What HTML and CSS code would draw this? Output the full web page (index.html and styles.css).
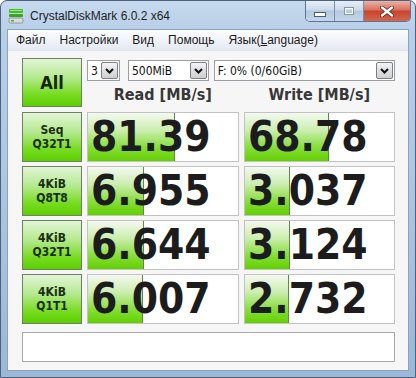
FILE: index.html
```html
<!DOCTYPE html>
<html>
<head lang="ru">
    <meta charset="UTF-8">
    <title>CrystalDiskMark 6.0.2 x64</title>
    <link rel="stylesheet" href="styles.css">
</head>
<body>
<div class="window">
    <div class="titlebar">
        <svg class="appicon" width="16" height="16" viewBox="0 0 16 16">
            <rect x="1" y="1" width="14" height="4" rx="1" fill="#3fbf1f"/>
            <rect x="2" y="2" width="12" height="1" fill="#9be87a"/>
            <rect x="1" y="6" width="14" height="3" rx="1" fill="#37a81a"/>
            <rect x="1" y="10" width="14" height="5" rx="1.5" fill="#d8dcdf" stroke="#7d868e" stroke-width="0.8"/>
            <rect x="3" y="12" width="3" height="1.5" fill="#3fbf1f"/>
        </svg>
        <span class="title">CrystalDiskMark 6.0.2 x64</span>
        <div class="winbtns">
            <div class="wb wb-min"><span></span></div>
            <div class="wb wb-max"><span></span></div>
            <div class="wb wb-close">
                <svg width="14" height="11" viewBox="0 0 14 11">
                    <path d="M2 1.5 L12 9.5 M12 1.5 L2 9.5" stroke="#5a2018" stroke-width="4" stroke-linecap="round"/>
                    <path d="M2 1.5 L12 9.5 M12 1.5 L2 9.5" stroke="#fff" stroke-width="2.4" stroke-linecap="round"/>
                </svg>
            </div>
        </div>
    </div>
    <div class="inner">
        <ul class="menubar">
            <li>Файл</li>
            <li>Настройки</li>
            <li>Вид</li>
            <li>Помощь</li>
            <li>Язык(<u>L</u>anguage)</li>
        </ul>
        <div class="client">
            <div class="grid">
                <div class="btn btn-all">All</div>
                <div class="top">
                    <div class="combos">
                        <div class="combo c-count"><span>3</span><i class="arrow"><svg width="9" height="6" viewBox="0 0 9 6"><polyline points="1,1 4.5,4.5 8,1" fill="none" stroke="#111" stroke-width="2"/></svg></i></div>
                        <div class="combo c-size"><span>500MiB</span><i class="arrow"><svg width="9" height="6" viewBox="0 0 9 6"><polyline points="1,1 4.5,4.5 8,1" fill="none" stroke="#111" stroke-width="2"/></svg></i></div>
                        <div class="combo c-drive"><span>F: 0% (0/60GiB)</span><i class="arrow"><svg width="9" height="6" viewBox="0 0 9 6"><polyline points="1,1 4.5,4.5 8,1" fill="none" stroke="#111" stroke-width="2"/></svg></i></div>
                    </div>
                    <div class="heads">
                        <div class="head">Read [MB/s]</div>
                        <div class="head">Write [MB/s]</div>
                    </div>
                </div>

                <div class="btn">Seq<br>Q32T1</div>
                <div class="res" style="--fill:58%">81.39</div>
                <div class="res" style="--fill:56%">68.78</div>

                <div class="btn">4KiB<br>Q8T8</div>
                <div class="res" style="--fill:37%">6.955</div>
                <div class="res" style="--fill:30%">3.037</div>

                <div class="btn">4KiB<br>Q32T1</div>
                <div class="res" style="--fill:37%">6.644</div>
                <div class="res" style="--fill:30%">3.124</div>

                <div class="btn">4KiB<br>Q1T1</div>
                <div class="res" style="--fill:36%">6.007</div>
                <div class="res" style="--fill:29%">2.732</div>
            </div>
            <div class="status"></div>
        </div>
    </div>
</div>
</body>
</html>
```

FILE: styles.css
```css
body, div, ul, li, span {
    margin: 0;
    padding: 0;
    list-style: none;
}

body {
    width: 416px;
    height: 378px;
    overflow: hidden;
    background: #fff;
}

.window {
    box-sizing: border-box;
    width: 416px;
    height: 378px;
    border: 1px solid #4d627c;
    border-radius: 7px 7px 0 0;
    padding: 0 6px 6px 6px;
    background: linear-gradient(#c6d9ee, #b8cfe8 30px, #a9c3df 60%, #9cb8d8);
    display: flex;
    flex-direction: column;
}

/* title bar */
.titlebar {
    height: 28px;
    display: flex;
    align-items: flex-start;
}

.appicon {
    margin: 7px 0 0 1px;
}

.title {
    margin: 8px 0 0 6px;
    font: 12px "Liberation Sans", Arial, sans-serif;
    color: #1e1e1e;
}

.winbtns {
    margin-left: auto;
    margin-right: -2px;
    display: flex;
    height: 20px;
    border: 1px solid #5f7592;
    border-top: none;
    border-radius: 0 0 5px 5px;
    overflow: hidden;
}

.wb {
    height: 20px;
    display: flex;
    align-items: center;
    justify-content: center;
}

.wb-min, .wb-max {
    width: 28px;
    background: linear-gradient(#e6eef7, #cbdaeb 45%, #b3c8df 50%, #c4d6ea);
    border-right: 1px solid #7c8fa8;
}

.wb-min span {
    width: 10px;
    height: 3px;
    margin-top: 6px;
    background: #fff;
    border: 1px solid #4f5d6e;
}

.wb-max span {
    width: 8px;
    height: 6px;
    border: 1px solid #8696aa;
    outline: 1px solid #fff;
    outline-offset: -2px;
}

.wb-close {
    width: 46px;
    background: linear-gradient(#eab2a6, #d9705c 45%, #c7432c 50%, #d2674f);
}

/* client frame */
.inner {
    flex: 1;
    border: 1px solid #8ba1bd;
    background: #f6f6f6;
    display: flex;
    flex-direction: column;
}

.menubar {
    height: 20px;
    display: flex;
    align-items: center;
    padding-left: 1px;
    background: linear-gradient(#fbfcfe, #eef2f8 60%, #e3e9f2);
    border-bottom: 1px solid #dde3ec;
    font: 12px "Liberation Sans", Arial, sans-serif;
    color: #1a1a1a;
}

.menubar li {
    padding: 0 7px;
}

.client {
    flex: 1;
    padding: 7px 12px 0 14px;
}

.grid {
    display: grid;
    grid-template-columns: 60px 152px 151px;
    grid-template-rows: repeat(5, 50px);
    column-gap: 5px;
    row-gap: 4px;
}

.btn {
    box-sizing: border-box;
    border: 1px solid #6f7f66;
    background: linear-gradient(#e2f5d6, #b4e98e 40%, #78dc22 75%, #5ccf00);
    display: flex;
    align-items: center;
    justify-content: center;
    text-align: center;
    font: bold 12px/14px "DejaVu Sans Condensed", "DejaVu Sans", sans-serif;
    font-stretch: condensed;
    color: #1b2e0e;
}

.btn-all {
    height: 49px;
    font-size: 18px;
    color: #152608;
}

.top {
    grid-column: 2 / 4;
    display: flex;
    flex-direction: column;
}

.combos {
    display: flex;
    margin-top: 2px;
    height: 21px;
}

.combo {
    box-sizing: border-box;
    height: 21px;
    border: 1px solid #9a9ea5;
    background: #fff;
    display: flex;
    align-items: center;
    padding: 0 1px 0 3px;
    font: 12px "DejaVu Sans Condensed", "DejaVu Sans", sans-serif;
    font-stretch: condensed;
    color: #111;
}

.combo span {
    flex: 1;
}

.c-count {
    width: 33px;
}

.c-size {
    width: 81px;
    margin-left: 8px;
}

.c-drive {
    width: 182px;
    margin-left: 5px;
}

.arrow {
    box-sizing: border-box;
    width: 17px;
    height: 17px;
    border: 1px solid #7b7f86;
    border-radius: 2px;
    background: linear-gradient(#f4f4f4, #e0e0e0 50%, #cfcfcf);
    display: flex;
    align-items: center;
    justify-content: center;
}

.heads {
    display: flex;
    column-gap: 5px;
    margin-top: 3px;
}

.head {
    width: 152px;
    text-align: center;
    font: bold 16px/22px "DejaVu Sans Condensed", "DejaVu Sans", sans-serif;
    font-stretch: condensed;
    color: #383838;
}

.res {
    box-sizing: border-box;
    border: 1px solid #c2c2c2;
    padding-left: 3px;
    background:
        linear-gradient(#5d8a44, #5d8a44) no-repeat var(--fill) 0 / 1px 100%,
        linear-gradient(#f4f9f0, #cdeeb2 35%, #8ade3e 70%, #62d000) no-repeat 0 0 / var(--fill) 100%,
        #fff;
    font: bold 42px/48px "DejaVu Sans Condensed", "DejaVu Sans", sans-serif;
    font-stretch: condensed;
    color: #1c1c1c;
}

.status {
    box-sizing: border-box;
    margin-top: 8px;
    width: 373px;
    height: 30px;
    border: 1px solid #a9a9a9;
    background: #fff;
}
```
